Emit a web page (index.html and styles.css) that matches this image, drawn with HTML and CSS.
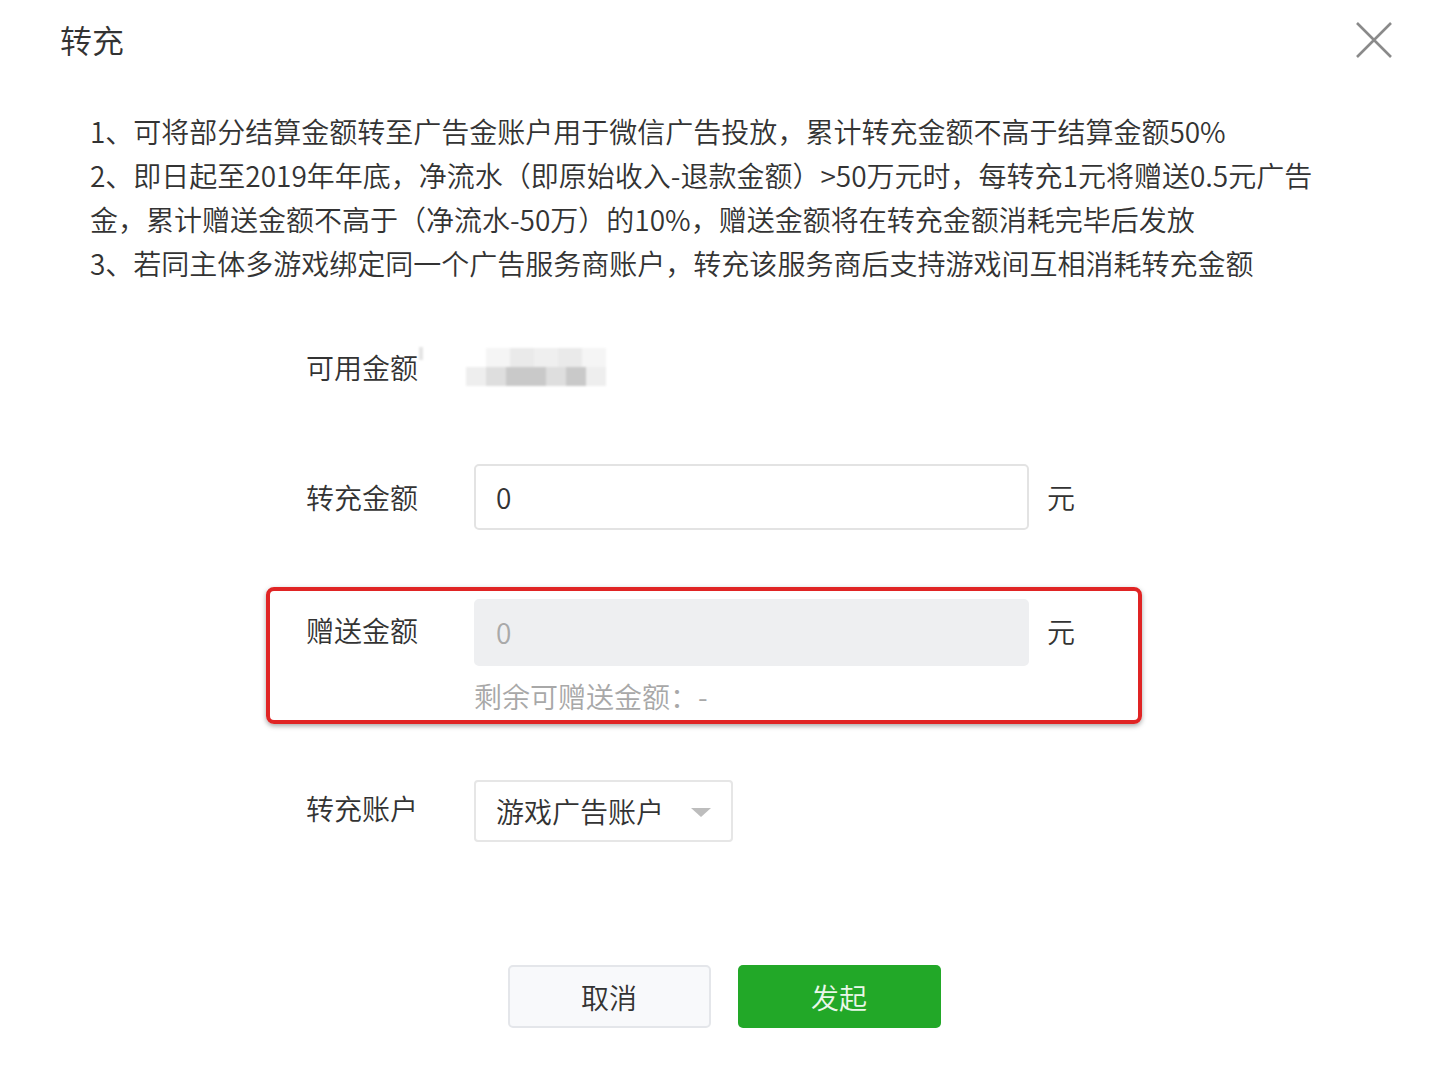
FILE: index.html
```html
<!DOCTYPE html>
<html lang="zh-CN">
<head>
<meta charset="utf-8">
<title>转充</title>
<link rel="stylesheet" href="styles.css">
</head>
<body>
<div class="dialog">
  <div class="header">
    <div class="title">转充</div>
    <svg class="close" width="36" height="36" viewBox="0 0 36 36"><path d="M1 1 L35 35 M35 1 L1 35" stroke="#8a8a8a" stroke-width="2.6" fill="none"/></svg>
  </div>
  <div class="notes">
    <p>1、可将部分结算金额转至广告金账户用于微信广告投放，累计转充金额不高于结算金额50%</p>
    <p>2、即日起至2019年年底，净流水（即原始收入-退款金额）&gt;50万元时，每转充1元将赠送0.5元广告金，累计赠送金额不高于（净流水-50万）的10%，赠送金额将在转充金额消耗完毕后发放</p>
    <p>3、若同主体多游戏绑定同一个广告服务商账户，转充该服务商后支持游戏间互相消耗转充金额</p>
  </div>
  <div class="form">
    <div class="row row-balance">
      <div class="label">可用金额</div>
      <div class="blur">
        <span class="tick"></span>
        <div class="blur-top"><i class="b1"></i><i class="b2"></i><i class="b3"></i><i class="b2"></i><i class="b1"></i></div>
        <div class="blur-bot"><i class="c1"></i><i class="c2"></i><i class="c3"></i><i class="c3"></i><i class="c2"></i><i class="c3"></i><i class="c1"></i></div>
      </div>
    </div>
    <div class="row row-input">
      <div class="label">转充金额</div>
      <div class="input">0</div>
      <div class="unit">元</div>
    </div>
    <div class="row row-gift">
      <div class="label">赠送金额</div>
      <div class="field">
        <div class="input disabled">0</div>
        <div class="hint">剩余可赠送金额：-</div>
      </div>
      <div class="unit">元</div>
    </div>
    <div class="row row-select">
      <div class="label">转充账户</div>
      <div class="select"><span>游戏广告账户</span><i class="caret"></i></div>
    </div>
  </div>
  <div class="actions">
    <div class="btn btn-cancel">取消</div>
    <div class="btn btn-primary">发起</div>
  </div>
  <div class="highlight"></div>
</div>
</body>
</html>
```
FILE: styles.css
```css
html, body {
  margin: 0;
  background: #fff;
}
body {
  font-family: "Noto Sans CJK SC", "Noto Sans", sans-serif;
  font-weight: 350;
  color: #333;
}
.dialog {
  position: relative;
  width: 1446px;
  height: 1076px;
  overflow: hidden;
}
.header {
  height: 78px;
  display: flex;
  align-items: center;
  justify-content: space-between;
  padding: 0 54px 0 60px;
}
.title {
  font-size: 32px;
  line-height: 40px;
  color: #333;
}
.close {
  display: block;
  margin-top: 2px;
}
.notes {
  margin-top: 31px;
  padding-left: 90px;
  width: 1240px;
  font-size: 28px;
  line-height: 44px;
  color: #333;
}
.notes p {
  margin: 0;
}
.form {
  margin-top: 60px;
  padding-left: 306px;
}
.row {
  display: flex;
  align-items: flex-start;
}
.label {
  width: 168px;
  flex: none;
  font-size: 28px;
  line-height: 44px;
  color: #333;
}
.row-balance {
  height: 44px;
  align-items: center;
}
.blur {
  position: relative;
  width: 140px;
  height: 38px;
  margin-left: -8px;
  filter: blur(1.2px);
}
.tick {
  position: absolute;
  left: -47px;
  top: -1px;
  width: 4px;
  height: 13px;
  background: #e4e4e4;
}
.blur-top, .blur-bot {
  display: flex;
  height: 19px;
}
.blur-top {
  padding-left: 20px;
}
.blur-top i, .blur-bot i {
  display: block;
  flex: 1;
}
.b1 { background: #f5f5f5; }
.b2 { background: #eaeaea; }
.b3 { background: #efefef; }
.c1 { background: #eeeeee; }
.c2 { background: #dedede; }
.c3 { background: #c9c9c9; }
.row-input {
  margin-top: 75px;
  align-items: center;
}
.input {
  box-sizing: border-box;
  width: 555px;
  height: 66px;
  border: 2px solid #e3e3e3;
  border-radius: 5px;
  padding-left: 20px;
  font-size: 28px;
  line-height: 62px;
  color: #333;
  background: #fff;
}
.input.disabled {
  background: #eeeff1;
  border-color: #eeeff1;
  color: #a9a9a9;
  height: 67px;
  line-height: 63px;
}
.unit {
  margin-left: 18px;
  font-size: 28px;
  line-height: 44px;
  color: #333;
}
.row-gift {
  margin-top: 69px;
}
.row-gift .label {
  margin-top: 9px;
}
.row-gift .unit {
  margin-top: 10px;
}
.hint {
  margin-top: 10px;
  font-size: 28px;
  line-height: 40px;
  color: #a8a8a8;
}
.row-select {
  margin-top: 64px;
}
.row-select .label {
  margin-top: 6px;
}
.select {
  box-sizing: border-box;
  width: 259px;
  height: 62px;
  border: 2px solid #e6e6e6;
  border-radius: 4px;
  padding: 0 20px 0 20px;
  display: flex;
  align-items: center;
  justify-content: space-between;
  font-size: 28px;
  color: #333;
}
.caret {
  display: block;
  width: 0;
  height: 0;
  border-left: 10px solid transparent;
  border-right: 10px solid transparent;
  border-top: 9px solid #bdbdbd;
  margin-top: 2px;
}
.actions {
  margin-top: 123px;
  display: flex;
  justify-content: center;
  gap: 27px;
  padding-left: 2px;
}
.btn {
  box-sizing: border-box;
  width: 203px;
  height: 63px;
  border-radius: 5px;
  font-size: 28px;
  display: flex;
  align-items: center;
  justify-content: center;
}
.btn-cancel {
  background: #f8f9fb;
  border: 2px solid #e4e6ea;
  color: #333;
}
.btn-primary {
  background: #22a828;
  color: #eaf7ea;
}
.highlight {
  position: absolute;
  left: 266px;
  top: 587px;
  width: 876px;
  height: 137px;
  box-sizing: border-box;
  border: 4px solid #e02424;
  border-radius: 8px;
  box-shadow: 0 2px 5px rgba(0, 0, 0, 0.35);
  pointer-events: none;
}
```
